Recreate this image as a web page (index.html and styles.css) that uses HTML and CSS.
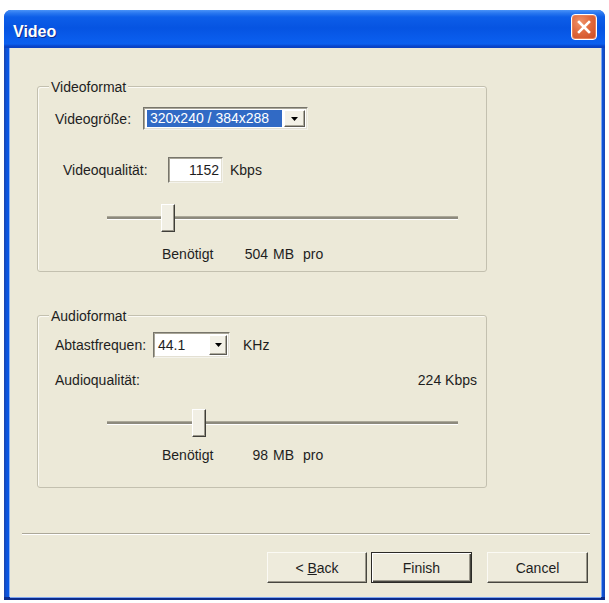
FILE: index.html
```html
<!DOCTYPE html>
<html lang="de">
<head>
<meta charset="utf-8">
<title>Video</title>
<link rel="stylesheet" href="styles.css">
</head>
<body>
<div class="window">
  <div class="titlebar">
    <span class="title">Video</span>
    <button class="close" type="button" aria-label="Schließen">
      <svg width="14" height="14" viewBox="0 0 14 14" aria-hidden="true">
        <path d="M2 2 L12 12 M12 2 L2 12" stroke="#fff" stroke-width="2.6" stroke-linecap="square" fill="none"/>
      </svg>
    </button>
  </div>
  <div class="frame">
    <div class="client">

      <div class="group group-video">
        <div class="legend">Videoformat</div>
        <div class="row row-size">
          <span class="lbl lbl-size">Videogröße:</span>
          <div class="combo combo-size">
            <span class="combo-text selected">320x240 / 384x288</span>
            <span class="arrow">
              <svg width="7" height="4" viewBox="0 0 7 4" aria-hidden="true"><path d="M0 0 H7 L3.5 4 Z" fill="#000"/></svg>
            </span>
          </div>
        </div>
        <div class="row row-quality">
          <span class="lbl lbl-quality">Videoqualität:</span>
          <div class="edit">1152</div>
          <span class="unit">Kbps</span>
        </div>
        <div class="slider">
          <div class="track"></div>
          <div class="thumb" style="left: 54px"></div>
        </div>
        <div class="need">
          <span class="need-lbl">Benötigt</span>
          <span class="need-num">504</span>
          <span class="need-unit">MB</span>
          <span class="need-per">pro</span>
        </div>
      </div>

      <div class="group group-audio">
        <div class="legend">Audioformat</div>
        <div class="row row-rate">
          <span class="lbl lbl-rate">Abtastfrequen:</span>
          <div class="combo combo-rate">
            <span class="combo-text">44.1</span>
            <span class="arrow">
              <svg width="7" height="4" viewBox="0 0 7 4" aria-hidden="true"><path d="M0 0 H7 L3.5 4 Z" fill="#000"/></svg>
            </span>
          </div>
          <span class="unit unit-rate">KHz</span>
        </div>
        <div class="row row-aq">
          <span class="lbl">Audioqualität:</span>
          <span class="value">224 Kbps</span>
        </div>
        <div class="slider">
          <div class="track"></div>
          <div class="thumb" style="left: 85px"></div>
        </div>
        <div class="need need-audio">
          <span class="need-lbl">Benötigt</span>
          <span class="need-num">98</span>
          <span class="need-unit">MB</span>
          <span class="need-per">pro</span>
        </div>
      </div>

      <div class="separator"></div>

      <div class="buttons">
        <button class="btn btn-back" type="button">&lt; <u>B</u>ack</button>
        <button class="btn btn-finish" type="button">Finish</button>
        <button class="btn btn-cancel" type="button">Cancel</button>
      </div>

    </div>
  </div>
</div>
</body>
</html>
```

FILE: styles.css
```css
* {
  box-sizing: border-box;
}

html,
body {
  margin: 0;
}

body {
  background: #fff;
  font-family: "Liberation Sans", Arial, sans-serif;
  font-size: 14px;
  color: #1e1e1e;
}

/* window frame */
.window {
  width: 601px;
  margin: 10px 0 0 4px;
  border-radius: 7px 7px 0 0;
  overflow: hidden;
  background: #0b4fd6;
}

.titlebar {
  height: 38px;
  display: flex;
  align-items: flex-start;
  justify-content: space-between;
  padding: 0 8px 0 9px;
  background: linear-gradient(to bottom,
    #4a93f8 0px, #2a78f0 3px, #0d5ee8 7px, #0654e2 18px,
    #0a5ded 30px, #0b5fee 34px, #0846cc 36px, #0a3fbf 38px);
}

.title {
  margin-top: 12px;
  color: #fff;
  font-weight: bold;
  font-size: 16px;
  line-height: 19px;
  text-shadow: 1px 1px 0 #0c2a8e;
}

.close {
  margin-top: 4px;
  width: 26px;
  height: 26px;
  padding: 0;
  display: flex;
  align-items: center;
  justify-content: center;
  border: 1px solid #fff;
  border-radius: 4px;
  background: radial-gradient(circle at 35% 30%, #f0946c 0%, #e06a3e 45%, #c94a22 100%);
  box-shadow: inset 0 0 0 1px #e9825a;
}

.frame {
  padding: 0 4px 3px 6px;
  background: linear-gradient(to right, #1c45ab 0, #0a56e2 3px, #0a56e2 598px, #1846b0 601px);
  box-shadow: inset 0 -3px 0 #0c2c8c;
}

.client {
  height: 549px;
  padding-top: 38px;
  background: #ece9d8;
  box-shadow: -1px 0 0 #8db3f3, 1px 0 0 #7ea6ef, 0 1px 0 #7ea6ef;
}

/* group boxes */
.group {
  width: 450px;
  margin-left: 27px;
  border: 1px solid #c3c0af;
  border-radius: 3px;
  box-shadow: inset 1px 1px 0 #fbfaf4;
}

.group + .group {
  margin-top: 43px;
}

.group-video {
  padding-bottom: 9px;
}

.group-audio {
  padding-bottom: 24px;
}

.legend {
  width: max-content;
  margin: -8px 0 0 11px;
  padding: 0 2px;
  line-height: 16px;
  background: #ece9d8;
}

.row {
  display: flex;
  align-items: center;
}

.row-size {
  margin-top: 12px;
  padding-left: 17px;
  height: 23px;
}

.lbl-size {
  width: 88px;
}

.row-quality {
  margin-top: 27px;
  padding-left: 25px;
  height: 26px;
}

.lbl-quality {
  width: 105px;
}

.row-rate {
  margin-top: 8px;
  padding-left: 17px;
  height: 26px;
}

.lbl-rate {
  width: 98px;
}

.row-aq {
  margin-top: 14px;
  padding: 0 9px 0 17px;
  justify-content: space-between;
  line-height: 16px;
}

.unit {
  margin-left: 7px;
}

.unit-rate {
  margin-left: 13px;
}

/* sunken fields */
.combo,
.edit {
  background: #fff;
  border: 1px solid;
  border-color: #77756b #f4f3ec #f4f3ec #77756b;
  box-shadow: inset 1px 1px 0 #a9a698, inset -1px -1px 0 #e3e0d3;
}

.combo {
  display: flex;
  padding: 2px;
}

.combo-size {
  width: 165px;
  height: 23px;
}

.combo-rate {
  width: 77px;
  height: 26px;
}

.combo-text {
  flex: 1;
  display: flex;
  align-items: center;
  padding-left: 2px;
  line-height: 17px;
}

.combo-text.selected {
  margin: 0 2px 0 1px;
  padding-left: 3px;
  background: #316ac5;
  color: #fff;
}

.arrow {
  width: 21px;
  display: flex;
  align-items: center;
  justify-content: center;
  background: #f3f1e7;
  border: 1px solid;
  border-color: #fff #5e5c55 #5e5c55 #fff;
  box-shadow: inset -1px -1px 0 #aeab9d;
}

.combo-rate .arrow {
  width: 18px;
}

.edit {
  width: 55px;
  height: 26px;
  display: flex;
  align-items: center;
  justify-content: flex-end;
  padding-right: 3px;
}

/* sliders */
.slider {
  position: relative;
  width: 351px;
  height: 28px;
  margin: 21px 0 0 69px;
  padding-top: 12px;
}

.track {
  height: 4px;
  border-top: 1px solid #aba898;
  border-bottom: 1px solid #fff;
  background: #8d8a7d;
}

.thumb {
  position: absolute;
  top: 0;
  width: 14px;
  height: 28px;
  background: #f1efe4;
  border: 1px solid;
  border-color: #fff #3f3e39 #3f3e39 #fff;
  box-shadow: inset -1px -1px 0 #9a978a;
}

/* storage estimate */
.need {
  display: flex;
  margin-top: 14px;
  padding-left: 124px;
  line-height: 16px;
}

.need-audio {
  margin-top: 10px;
}

.need-lbl {
  width: 80px;
}

.need-num {
  width: 26px;
  text-align: right;
}

.need-unit {
  margin-left: 5px;
}

.need-per {
  margin-left: 9px;
}

/* footer */
.separator {
  width: 568px;
  height: 2px;
  margin: 45px 0 0 12px;
  border-top: 1px solid #aca899;
  border-bottom: 1px solid #fff;
}

.buttons {
  display: flex;
  justify-content: flex-end;
  margin-top: 17px;
  padding-right: 13px;
}

.btn {
  height: 31px;
  padding: 0;
  font-family: inherit;
  font-size: 14px;
  color: #1e1e1e;
  background: #eeebdc;
  border: 1px solid;
  border-color: #fbfaf4 #47463f #47463f #fbfaf4;
  box-shadow: inset -1px -1px 0 #9b988b;
}

.btn-back {
  width: 100px;
}

.btn-finish {
  width: 101px;
  margin-left: 4px;
  border: 1px solid #2b2a26;
  box-shadow: inset 1px 1px 0 #fff, inset -1px -1px 0 #47463f, inset -2px -2px 0 #9b988b;
}

.btn-cancel {
  width: 101px;
  margin-left: 15px;
}
```
